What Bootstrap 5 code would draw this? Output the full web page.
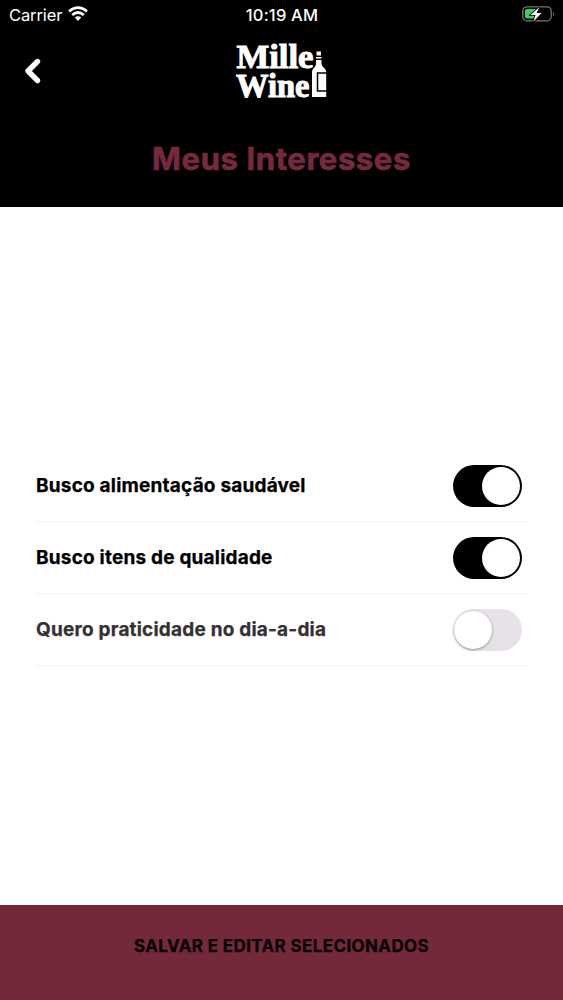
<!DOCTYPE html>
<html lang="pt-BR">
<head>
<meta charset="utf-8">
<meta name="viewport" content="width=device-width, initial-scale=1">
<title>Meus Interesses</title>
<link href="https://cdn.jsdelivr.net/npm/bootstrap@5.3.0/dist/css/bootstrap.min.css" rel="stylesheet">
<style>
  body { font-family: Inter, "Liberation Sans", sans-serif; font-weight: 700; color: #000; }
  .app-head { height: 207px; background: #010001; }
  .status-bar { height: 28px; font-size: 16.5px; font-weight: 400; line-height: 28px; }
  .status-bar > div { flex: 1 1 0; }
  .carrier-side { padding-left: 9px; gap: 6px; }
  .carrier { letter-spacing: -.1px; padding-top: 1px; }
  .clock { font-weight: 500; font-size: 16.5px; letter-spacing: .2px; padding-top: 1px; }
  .brand-bar { height: 86px; }
  .brand-bar > div { flex: 1 1 0; min-width: 0; }
  .back-icon { margin-left: 24px; }
  .page-title { font-size: 31px; line-height: 40px; color: #76293c; letter-spacing: .6px; margin-top: 25px; -webkit-text-stroke: .7px #76293c; }
  .interests { padding: 243px 35px 0 36px; }
  .interest { height: 72px; border-bottom: 1px solid #f1f1f1; font-size: 19px; letter-spacing: .2px; padding-right: 6px; -webkit-text-stroke: .25px; }
  .interest span { padding-top: 2px; }
  .interest.is-off { color: #343034; }
  .form-check-input.toggle { width: 69px; height: 42px; border: 0; border-radius: 21px; background-color: #e6e2e7; background-image: none; margin: 0; box-shadow: none; }
  .toggle::before { content: ""; display: block; width: 38px; height: 38px; margin: 2px 1px; border-radius: 50%; background: #fff; box-shadow: 0 1px 3px rgba(0,0,0,.35); }
  .form-check-input.toggle:checked { background-color: #000; background-image: none; }
  .toggle:checked::before { margin-left: 29px; box-shadow: none; }
  .save-btn { height: 95px; background: #74293b; color: #080003; font-size: 17px; letter-spacing: .38px; padding-bottom: 18px; -webkit-text-stroke: .25px; }
</style>
</head>
<body class="vh-100 d-flex flex-column overflow-hidden bg-white">
<header class="app-head text-white">
  <div class="status-bar d-flex">
    <div class="carrier-side d-flex align-items-center">
      <span class="carrier">Carrier</span>
      <svg width="20" height="16" viewBox="0 0 20 16" fill="none" stroke="#fff" stroke-width="2.7"><path d="M1 5.4Q10-2 19 5.4M4.2 9Q10 4 15.8 9"/><path d="M6.8 11.5Q10 8.8 13.2 11.5L10 15Z" fill="#fff" stroke="none"/></svg>
    </div>
    <div class="clock text-center">10:19 AM</div>
    <div class="d-flex align-items-center justify-content-end pe-2">
      <svg width="33" height="18" viewBox="0 0 33 18"><rect x=".8" y="1.8" width="28.4" height="14" rx="4" fill="none" stroke="#747474" stroke-width="1.3"/><rect x="3" y="4" width="12" height="9.600" rx="2" fill="#3fcb62"/><path d="M31 6.500Q33 9 31 11Z" fill="#747474"/><path d="M17.500 2L8.500 10h5l-2 6.500 8-8.500h-5z" fill="#fff" stroke="#000" stroke-width="1.600" paint-order="stroke"/></svg>
    </div>
  </div>
  <div class="brand-bar d-flex align-items-center">
    <div><svg class="back-icon" width="18" height="28" viewBox="0 0 18 28" fill="none" stroke="#fff" stroke-width="5.400" stroke-linecap="round" stroke-linejoin="round"><path d="M13.500 4.500L4 14L13.500 23.500"/></svg></div>
    <svg class="overflow-visible mb-1" width="94" height="58" viewBox="0 0 94 58" fill="#fff" role="img" aria-label="Mille Wine">
      <g font-family="'Liberation Serif', serif" font-weight="700" font-size="33" stroke="#fff" stroke-width="1">
        <text x="1.500" y="28" textLength="77" lengthAdjust="spacingAndGlyphs">Mille</text>
        <text x="1" y="56.500" textLength="73.500" lengthAdjust="spacingAndGlyphs">Wine</text>
      </g>
      <path d="M81.500 11.500H86v4h-4.500zM81 17h5.500v1.500H81zM81 20h5.500v3.500c0 4 4.700 4 4.700 9V57H77V32.500c0-5 4-5 4-9z"/>
      <path d="M91.500 33h-9v18h9" fill="none" stroke="#000" stroke-width="1.500"/>
    </svg>
    <div></div>
  </div>
  <h1 class="page-title text-center fw-bold mb-0">Meus Interesses</h1>
</header>
<main class="interests flex-grow-1">
  <label class="interest d-flex align-items-center justify-content-between"><span>Busco alimentação saudável</span><input class="form-check-input toggle" type="checkbox" checked></label>
  <label class="interest d-flex align-items-center justify-content-between"><span>Busco itens de qualidade</span><input class="form-check-input toggle" type="checkbox" checked></label>
  <label class="interest is-off d-flex align-items-center justify-content-between"><span>Quero praticidade no dia-a-dia</span><input class="form-check-input toggle" type="checkbox"></label>
</main>
<button class="save-btn btn rounded-0 border-0 w-100 fw-bold">SALVAR E EDITAR SELECIONADOS</button>
<script src="https://cdn.jsdelivr.net/npm/bootstrap@5.3.0/dist/js/bootstrap.bundle.min.js"></script>
</body>
</html>
